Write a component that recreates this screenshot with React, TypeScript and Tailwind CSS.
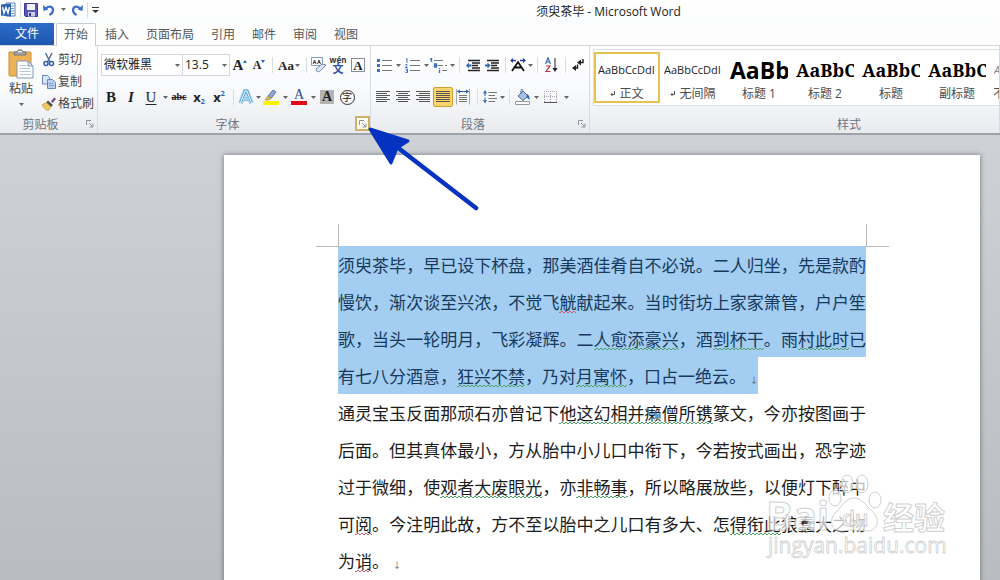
import React, { useState } from "react";
import classnames from "clsx";

type BtnProps = {
  label: string;
  className?: string;
  children: React.ReactNode;
};

function Btn({ label, className, children }: BtnProps) {
  return (
    <button
      type="button"
      aria-label={label}
      className={classnames(
        "flex h-5 shrink-0 items-center justify-center rounded-xs hover:bg-amber-100",
        className || "w-5"
      )}
    >
      {children}
    </button>
  );
}

function Caret({ className }: { className?: string }) {
  return (
    <svg viewBox="0 0 5 3" className={classnames("h-[3px] w-[5px] shrink-0", className)}>
      <path d="M0 0h5L2.500 3z" fill="#666" />
    </svg>
  );
}

function More({ label, wide }: { label: string; wide?: boolean }) {
  return (
    <Btn label={label} className={wide ? "w-2" : "w-1.5"}>
      <Caret />
    </Btn>
  );
}

function Sep() {
  return (
    <span className="flex w-2 shrink-0 justify-center">
      <span className="h-4 w-px bg-[#d9dce0]" />
    </span>
  );
}

function Launcher({ label, active }: { label: string; active?: boolean }) {
  return (
    <button
      type="button"
      aria-label={label}
      className={classnames(
        "absolute right-0 bottom-0.5 flex h-[15px] w-[15px] items-center justify-center",
        active && "border-2 border-[#cdb26a] bg-[#fffdf2]"
      )}
    >
      <svg viewBox="0 0 8 8" className="h-2 w-2 shrink-0" fill="none" stroke="#8c929b">
        <path d="M.5 5V.5H5M3 3l3.500 3.500M7 3.500V7H3.500" />
      </svg>
    </button>
  );
}

type GroupProps = {
  title: string;
  launcher?: boolean;
  active?: boolean;
  className?: string;
  titleClass?: string;
  children: React.ReactNode;
};

function Group({ title, launcher, active, className, titleClass, children }: GroupProps) {
  return (
    <section
      className={classnames(
        "flex h-full flex-col justify-between border-r border-[#d8dbe0] pt-[3px]",
        className
      )}
    >
      {children}
      <div
        className={classnames(
          "relative flex h-4 items-center justify-center text-[#6d7480]",
          titleClass || "pr-4"
        )}
      >
        {title}
        {launcher && <Launcher label={title + "设置"} active={active} />}
      </div>
    </section>
  );
}

/* ---------- icons ---------- */

function Lines({ rows }: { rows: number[][] }) {
  return (
    <svg viewBox="0 0 14 14" className="h-3.5 w-3.5" stroke="#555" shapeRendering="crispEdges">
      {rows.map(([a, b], i) => (
        <path key={i} d={`M${a} ${i * 2 + 1.5}H${b}`} />
      ))}
    </svg>
  );
}

const LEFT = [[0, 14], [0, 11], [0, 14], [0, 11], [0, 14], [0, 11]];
const CENTER = [[0, 14], [2, 12], [0, 14], [2, 12], [0, 14], [2, 12]];
const RIGHT = [[0, 14], [3, 14], [0, 14], [3, 14], [0, 14], [3, 14]];
const FULL = [[0, 14], [0, 14], [0, 14], [0, 14], [0, 14], [0, 14]];

function WordIcon() {
  return (
    <svg viewBox="0 0 16 16" className="h-4 w-4">
      <path d="M6 1h9v13H6z" fill="#fff" stroke="#5b7fb5" />
      <path d="M11 4h3M11 6.500h3M11 9h3M11 11.500h3" stroke="#7d9ccb" />
      <path d="M1 2.500l10-1v13l-10-1z" fill="#2a62b0" />
      <path d="M2.500 5l1.500 6L6 5.500 8 11l1.500-6" fill="none" stroke="#fff" strokeWidth="1.400" />
    </svg>
  );
}

function SaveIcon() {
  return (
    <svg viewBox="0 0 14 14" className="h-3.5 w-3.5">
      <path d="M.5.500h13v13h-12l-1-1z" fill="#5a55b5" stroke="#3e3a94" />
      <path d="M3 1h8v6H3z" fill="#eef1fb" />
      <path d="M4 9h7v4.500H4z" fill="#c9cce4" />
      <path d="M5 10h2v3H5z" fill="#3e3a94" />
    </svg>
  );
}

function UndoIcon({ flip }: { flip?: boolean }) {
  return (
    <svg viewBox="0 0 12 12" className={classnames("h-3 w-3", flip && "-scale-x-100")}>
      <path d="M3 4.500C6 1.500 10 2.500 10 6c0 2-1.500 4-3.500 5" fill="none" stroke="#3c6fc4" strokeWidth="2.200" />
      <path d="M0 1l.5 6 5-1.500z" fill="#3c6fc4" />
    </svg>
  );
}

function PasteIcon() {
  return (
    <svg viewBox="0 0 26 30" className="h-[30px] w-[26px]">
      <path d="M1 3h21a1 1 0 0 1 1 1v23H2a1 1 0 0 1-1-1z" fill="#ecb254" stroke="#c98f35" />
      <path d="M6 6V3h3c0-3 6-3 6 0h3v3z" fill="#a5a9ae" stroke="#72767c" />
      <path d="M10 2.500h4" stroke="#fff" />
      <path d="M9 12h11l5 5v12H9z" fill="#fff" stroke="#8397b8" />
      <path d="M20 12v5h5z" fill="#d7e1f0" stroke="#8397b8" />
      <path d="M11.500 16.500h7M11.500 19.500h11M11.500 22.500h11M11.500 25.500h11" stroke="#b4c3dc" />
    </svg>
  );
}

function CutIcon() {
  return (
    <svg viewBox="0 0 12 14" className="h-3.5 w-3.5" fill="none">
      <path d="M2.500 0l4.500 9M9 0L4.500 9" stroke="#5571a5" strokeWidth="1.500" />
      <circle cx="3" cy="10.500" r="2" stroke="#2f5cae" strokeWidth="1.500" />
      <circle cx="8.500" cy="10.500" r="2" stroke="#2f5cae" strokeWidth="1.500" />
    </svg>
  );
}

function CopyIcon() {
  return (
    <svg viewBox="0 0 14 14" className="h-3.5 w-3.5" stroke="#6485bd">
      <path d="M.5.500h5l2 2V9h-7z" fill="#dbe7f8" />
      <path d="M5.500 4.500h5l3 3v6h-8z" fill="#b8d0f0" />
      <path d="M7 8.500h4M7 10.500h5" stroke="#7e9fd4" />
    </svg>
  );
}

function BrushIcon() {
  return (
    <svg viewBox="0 0 14 14" className="h-3.5 w-3.5">
      <path d="M9 4l3.500-3.500L14 2l-3.500 4z" fill="#6b4a87" />
      <path d="M6 3.500L11 8l-2 2-5-4.500z" fill="#4e5158" />
      <path d="M4 5.500L9 10l-3 4c-2-1-4.500-3-6-6z" fill="#eccb62" stroke="#b38e2d" strokeWidth=".6" />
    </svg>
  );
}

function ListIcon({ numbered }: { numbered?: boolean }) {
  return (
    <svg viewBox="0 0 15 15" className="h-[15px] w-[15px]">
      <path d="M5 2.500h10M5 7.500h10M5 12.500h10" stroke="#777" />
      {numbered ? (
        <path d="M1 1l1-.5V5M.5 6.500h1.500v1L.5 9.500h2M.5 11h2v3.500h-2M1 12.700h1" fill="none" stroke="#3c73bf" />
      ) : (
        <path d="M0 1h3v3H0zM0 6h3v3H0zM0 11h3v3H0z" fill="#3c73bf" />
      )}
    </svg>
  );
}

function MultiIcon() {
  return (
    <svg viewBox="0 0 18 15" className="h-[15px] w-[18px]" fill="none">
      <path d="M4 2.500h9M8 7.500h5M15 7.500h2M12 12.500h5" stroke="#777" />
      <path d="M0 1.500l1.500-1V4M4 6h2.500v3H4.500V7.500h2M9.500 10v1M9.500 11.800V15" stroke="#3c73bf" strokeWidth="1.400" />
    </svg>
  );
}

function IndentIcon({ right }: { right?: boolean }) {
  return (
    <svg viewBox="0 0 14 13" className="h-[13px] w-3.5">
      <path d="M2 1.500h12M6 4h8M6 6.500h6M6 9h8M2 11.500h12" stroke="#222" strokeWidth="1.300" />
      <path d={right ? "M5.500 6.500L2.500 3.500v2H0v2h2.500v2z" : "M0 6.500L3 3.500v2h2.500v2H3v2z"} fill="#2c62b8" />
    </svg>
  );
}

function AsianLayoutIcon() {
  return (
    <svg viewBox="0 0 16 14" className="h-3.5 w-4" fill="none">
      <path d="M2 13l6-9 6 9M4.500 9.500h7" stroke="#111" strokeWidth="1.800" />
      <path d="M1 2.500h5M10 2.500h5" stroke="#2b3f99" strokeWidth="1.500" />
      <path d="M0 2.500L3 0v5zM16 2.500L13 0v5z" fill="#2b3f99" />
    </svg>
  );
}

function SortIcon() {
  return (
    <svg viewBox="0 0 13 16" className="h-4 w-[13px]" fill="none">
      <path d="M.5 7L3 .8 5.500 7M1.500 5h3" stroke="#3a69b5" strokeWidth="1.200" />
      <path d="M1 9h4l-4 5.500h4.500" stroke="#b23a3a" strokeWidth="1.200" />
      <path d="M10 1v12" stroke="#222" />
      <path d="M7.500 11h5L10 15z" fill="#222" />
    </svg>
  );
}

function MarksIcon() {
  return (
    <svg viewBox="0 0 12 14" className="h-3.5 w-3" fill="none">
      <path d="M11 1v3.500H7M5.500 6.500V10H3" stroke="#222" strokeWidth="1.400" />
      <path d="M5 4.500l4-3v6zM0 10l4-3v6z" fill="#222" />
    </svg>
  );
}

function DistributeIcon() {
  return (
    <svg viewBox="0 0 14 16" className="h-4 w-3.5">
      <path d="M.5 0v15.500M13.500 0v15.500" stroke="#aaa" />
      <path d="M1 2.500h12" stroke="#2c62b8" />
      <path d="M1 2.500L4 .500v4zM13 2.500l-3-2v4z" fill="#2c62b8" />
      <path d="M3 6.500h8M3 8.500h8M3 10.500h8M3 12.500h8" stroke="#777" />
    </svg>
  );
}

function SpacingIcon() {
  return (
    <svg viewBox="0 0 14 14" className="h-3.5 w-3.5">
      <path d="M5.500 2.500H14M5.500 5.500H12M5.500 8.500H14M5.500 11.500H12" stroke="#777" />
      <path d="M2 0l2 3.500H0zM2 13.500L4 10H0zM1.500 3h1v3h-1zM1.500 7.500h1v3h-1z" fill="#2c62b8" />
    </svg>
  );
}

function ShadingIcon() {
  return (
    <svg viewBox="0 0 16 16" className="h-4 w-4">
      <path d="M3 7l5-5 5 5-5 4.500z" fill="#a9c2e6" stroke="#47689d" />
      <path d="M6 5V1.500c0-1.500 2-1.500 2 0" fill="none" stroke="#47689d" />
      <path d="M12 5c2 1 3 3 2.500 6-1-1-2-2-3-2.500z" fill="#2c62b8" />
      <path d="M.5 12.500h14v3H.5z" fill="#fff" stroke="#999" />
    </svg>
  );
}

function BorderIcon() {
  return (
    <svg viewBox="0 0 14 14" className="h-3.5 w-3.5" fill="none">
      <path d="M.5 1v11M6.500 1v11M12.500 1v11M0 1.500h13M0 6.500h13" stroke="#aaa" strokeDasharray="1 1" />
      <path d="M0 12.500h13" stroke="#555" />
    </svg>
  );
}

function ClearIcon() {
  return (
    <svg viewBox="0 0 16 16" className="h-4 w-4">
      <path d="M.5.500h11v8H.5z" fill="#fff" stroke="#8299c2" />
      <path d="M2 7l1.500-4L5 7M2.500 5.500h2M6.500 7L8 3l1.500 4M7 5.500h2" fill="none" stroke="#333" strokeWidth=".9" />
      <path d="M5 12l6-5 4 1-5.500 5.500c-1 1.500-3 1.500-4 .5z" fill="#dde6f4" stroke="#7187ae" />
    </svg>
  );
}

function HighlightIcon() {
  return (
    <svg viewBox="0 0 16 16" className="h-4 w-4">
      <path d="M0 12h16v4H0z" fill="#fff200" />
      <path d="M5 7l5-6 3 2-5 6.500z" fill="#8fa7cf" stroke="#4c618c" strokeWidth=".8" />
      <path d="M5 7l3 2.500-2 1.500H2z" fill="#e3bd4e" stroke="#8a7538" strokeWidth=".6" />
    </svg>
  );
}

/* ---------- ribbon ---------- */

const TABS = ["插入", "页面布局", "引用", "邮件", "审阅", "视图"];

function TitleBar() {
  return (
    <header className="flex h-[23px] items-center bg-gradient-to-b from-white to-[#fbfcfd]">
      <div className="flex h-full items-center pb-1">
        <WordIcon />
        <Sep />
        <Btn label="保存" className="w-3.5"><SaveIcon /></Btn>
        <Btn label="撤消" className="ml-[5px] w-3"><UndoIcon /></Btn>
        <Btn label="撤消列表" className="w-4"><Caret /></Btn>
        <Btn label="恢复" className="w-3"><UndoIcon flip /></Btn>
        <Sep />
        <Btn label="自定义快速访问工具栏" className="w-2">
          <svg viewBox="0 0 7 6" className="h-1.5 w-[7px] shrink-0">
            <path d="M0 .500h7" stroke="#333" />
            <path d="M0 3h7L3.500 6z" fill="#333" />
          </svg>
        </Btn>
      </div>
      <h1 className="flex-1 pl-[118px] text-center text-xs text-[#222]">须臾茶毕 - Microsoft Word</h1>
    </header>
  );
}

function TabBar() {
  return (
    <nav className="flex h-[23px] items-stretch border-b border-[#d3d6db] text-[#555]">
      <button type="button" className="w-[54px] bg-gradient-to-b from-[#2c6cc9] to-[#1f57ae] text-white">
        文件
      </button>
      <button
        type="button"
        className="-mb-px ml-0.5 w-10 rounded-t-xs border border-b-0 border-[#c9cdd3] bg-white"
      >
        开始
      </button>
      <div className="flex gap-px pt-px pl-px">
        {TABS.map((tab) => (
          <button key={tab} type="button" className="px-2">
            {tab}
          </button>
        ))}
      </div>
    </nav>
  );
}

function ClipboardGroup() {
  return (
    <Group title="剪贴板" launcher className="w-[98px]">
      <div className="flex">
        <button type="button" className="flex w-[42px] flex-col items-center text-[#444]">
          <PasteIcon />
          <span className="leading-5">粘贴</span>
          <Caret className="mt-1" />
        </button>
        <div className="flex flex-1 flex-col text-[#444]">
          <button type="button" className="flex h-[22px] items-center gap-0.5"><CutIcon /><span>剪切</span></button>
          <button type="button" className="flex h-[22px] items-center gap-0.5"><CopyIcon /><span>复制</span></button>
          <button type="button" className="flex h-[22px] items-center gap-0.5 whitespace-nowrap"><BrushIcon /><span>格式刷</span></button>
        </div>
      </div>
    </Group>
  );
}

function Combo({ label, options, className }: { label: string; options: string[]; className: string }) {
  const [value, setValue] = useState(options[0]);
  return (
    <label className={classnames("relative flex h-[22px] items-center border border-[#d5d8dc] bg-white", className)}>
      <select
        aria-label={label}
        value={value}
        onChange={(e) => setValue(e.target.value)}
        className="h-full w-full appearance-none pl-0.5 text-[#222] outline-none"
      >
        {options.map((o) => (
          <option key={o}>{o}</option>
        ))}
      </select>
      <Caret className="pointer-events-none absolute right-0.5" />
    </label>
  );
}

const SERIF = "font-['Liberation_Serif',serif] leading-none text-[#222]";

function FontGroup() {
  return (
    <Group title="字体" launcher active className="w-[273px] pl-[3px]">
      <div className="flex flex-col gap-2 pt-1">
        <div className="flex h-6 items-center">
          <Combo label="字体" options={["微软雅黑", "宋体", "黑体"]} className="w-[82px]" />
          <Combo label="字号" options={["13.5", "14", "16"]} className="-ml-px w-12" />
          <Btn label="增大字体">
            <span className={classnames(SERIF, "text-[15px] font-bold")}>A</span>
            <svg viewBox="0 0 4 3" className="mb-2 h-[3px] w-1"><path d="M0 3h4L2 0z" fill="#2c62b8" /></svg>
          </Btn>
          <Btn label="缩小字体" className="w-[18px]">
            <span className={classnames(SERIF, "text-xs font-bold")}>A</span>
            <svg viewBox="0 0 4 3" className="mb-2 h-[3px] w-1"><path d="M0 0h4L2 3z" fill="#2c62b8" /></svg>
          </Btn>
          <Sep />
          <Btn label="更改大小写" className="w-[26px] gap-px">
            <span className={classnames(SERIF, "text-[13px] font-bold")}>Aa</span>
            <Caret />
          </Btn>
          <Sep />
          <Btn label="清除格式" className="w-[18px]"><ClearIcon /></Btn>
          <Btn label="拼音指南" className="w-5 flex-col">
            <span className="text-[8px] leading-[7px] font-bold text-[#333]">wén</span>
            <span className="text-[11px] leading-[11px] font-bold text-[#2c4fa8]">文</span>
          </Btn>
          <Btn label="字符边框">
            <span className={classnames(SERIF, "flex h-3.5 w-3.5 items-center justify-center border border-[#8a8f99] text-[13px] font-bold")}>A</span>
          </Btn>
        </div>
        <div className="flex h-6 items-center">
          <Btn label="加粗"><span className={classnames(SERIF, "text-[15px] font-bold")}>B</span></Btn>
          <Btn label="倾斜"><span className={classnames(SERIF, "text-[15px] font-bold italic")}>I</span></Btn>
          <Btn label="下划线"><span className={classnames(SERIF, "text-[15px] underline underline-offset-2")}>U</span></Btn>
          <More label="下划线样式" wide />
          <Btn label="删除线"><span className={classnames(SERIF, "text-[10px] font-bold line-through")}>abc</span></Btn>
          <Btn label="下标">
            <span className="text-[13px] leading-none font-bold text-[#222]">x</span>
            <span className="mt-2 text-[7px] leading-none font-bold text-[#2c62b8]">2</span>
          </Btn>
          <Btn label="上标">
            <span className="text-[13px] leading-none font-bold text-[#222]">x</span>
            <span className="mb-2 text-[7px] leading-none font-bold text-[#2c62b8]">2</span>
          </Btn>
          <Sep />
          <Btn label="文本效果" className="w-[18px]">
            <svg viewBox="0 0 16 16" className="h-4 w-4" fill="none" strokeLinejoin="round">
              <path d="M2.500 14L7 2h2l4.500 12M5 10h6" stroke="#a8d3ef" strokeWidth="4.500" />
              <path d="M2.500 14L7 2h2l4.500 12M5 10h6" stroke="#4a9fd4" strokeWidth="2.500" />
              <path d="M2.500 14L7 2h2l4.500 12M5 10h6" stroke="#fff" />
            </svg>
          </Btn>
          <More label="文本效果选项" />
          <Btn label="突出显示"><HighlightIcon /></Btn>
          <More label="突出显示颜色" wide />
          <Btn label="字体颜色" className="w-5 flex-col">
            <span className="font-['Liberation_Serif',serif] text-sm leading-3 text-[#2b4a8e]">A</span>
            <span className="h-1 w-4 bg-[#e10b17]" />
          </Btn>
          <More label="字体颜色选项" wide />
          <Btn label="字符底纹">
            <span className={classnames(SERIF, "flex h-3.5 w-3.5 items-center justify-center bg-[#b3b3b3] text-sm font-bold")}>A</span>
          </Btn>
          <Btn label="带圈字符">
            <span className="flex h-[15px] w-[15px] items-center justify-center rounded-full border border-[#333] text-[10px] leading-none text-[#222]">字</span>
          </Btn>
        </div>
      </div>
    </Group>
  );
}

function ParagraphGroup() {
  return (
    <Group title="段落" launcher className="w-[219px] pl-0.5">
      <div className="flex flex-col gap-2 pt-1">
        <div className="flex h-6 items-center">
          <Btn label="项目符号" className="w-[22px]"><ListIcon /></Btn>
          <More label="项目符号库" />
          <Btn label="编号" className="w-[22px]"><ListIcon numbered /></Btn>
          <More label="编号库" />
          <Btn label="多级列表"><MultiIcon /></Btn>
          <More label="列表库" />
          <Sep />
          <Btn label="减少缩进量"><IndentIcon /></Btn>
          <Btn label="增加缩进量" className="w-[18px]"><IndentIcon right /></Btn>
          <Sep />
          <Btn label="中文版式" className="w-[18px]"><AsianLayoutIcon /></Btn>
          <More label="中文版式选项" />
          <Sep />
          <Btn label="排序"><SortIcon /></Btn>
          <Sep />
          <Btn label="显示编辑标记" className="w-[18px]"><MarksIcon /></Btn>
        </div>
        <div className="flex h-6 items-center">
          <Btn label="左对齐"><Lines rows={LEFT} /></Btn>
          <Btn label="居中"><Lines rows={CENTER} /></Btn>
          <Btn label="右对齐"><Lines rows={RIGHT} /></Btn>
          <Btn label="两端对齐" className="w-5 border border-[#c9a036] bg-[#fcd467]"><Lines rows={FULL} /></Btn>
          <Btn label="分散对齐"><DistributeIcon /></Btn>
          <Sep />
          <Btn label="行距" className="w-[18px]"><SpacingIcon /></Btn>
          <More label="行距选项" />
          <Sep />
          <Btn label="底纹"><ShadingIcon /></Btn>
          <More label="底纹颜色" />
          <Btn label="边框" className="w-6"><BorderIcon /></Btn>
          <More label="边框选项" />
        </div>
      </div>
    </Group>
  );
}

const HEADING = "font-['Noto_Serif','Liberation_Serif',serif] text-lg font-bold text-black";

const STYLES = [
  { name: "正文", mark: true, sample: "AaBbCcDdI", look: "text-[11px] text-[#222]", active: true },
  { name: "无间隔", mark: true, sample: "AaBbCcDdI", look: "text-[11px] text-[#222]" },
  { name: "标题 1", sample: "AaBb", look: "text-[23px] font-bold text-black" },
  { name: "标题 2", sample: "AaBbC", look: HEADING },
  { name: "标题", sample: "AaBbC", look: HEADING },
  { name: "副标题", sample: "AaBbC", look: HEADING },
  { name: "不明显强调", sample: "AaBbCcDdI", look: "text-[11px] italic text-[#888]" },
];

function StylesGroup() {
  return (
    <Group title="样式" className="min-w-0 flex-1 pl-[3px]" titleClass="pl-[106px]">
      <div className="flex h-[57px] overflow-hidden border border-r-0 border-[#dcdfe3] bg-white py-0.5">
        {STYLES.map((s) => (
          <button
            key={s.name}
            type="button"
            className={classnames(
              "flex w-[66px] shrink-0 flex-col border-2 px-0.5",
              s.active ? "border-[#e8c14f]" : "border-transparent"
            )}
          >
            <span className={classnames("flex h-8 w-full items-center overflow-hidden whitespace-nowrap", s.look)}>
              {s.sample}
            </span>
            <span className="flex w-full items-center justify-center gap-1 overflow-hidden leading-[15px] whitespace-nowrap text-[#4c4c4c]">
              {s.mark && (
                <svg viewBox="0 0 5 6" className="h-1.5 w-[5px]" fill="none" stroke="#555">
                  <path d="M4.500 0v3.500H1M2.500 2L1 3.500 2.500 5" />
                </svg>
              )}
              {s.name}
            </span>
          </button>
        ))}
      </div>
    </Group>
  );
}

/* ---------- document ---------- */

// two offset dashed rows make the small zigzag under flagged words
function Wavy({ red, children }: { red?: boolean; children: React.ReactNode }) {
  return (
    <span
      className={classnames(
        "bg-[length:4px_1px] bg-[position:0_calc(100%-1px),0_calc(100%-2px)] bg-repeat-x",
        red
          ? "bg-[image:linear-gradient(90deg,#d0606f_50%,transparent_50%),linear-gradient(90deg,transparent_50%,#d0606f_50%)]"
          : "bg-[image:linear-gradient(90deg,#4fa368_50%,transparent_50%),linear-gradient(90deg,transparent_50%,#4fa368_50%)]"
      )}
    >
      {children}
    </span>
  );
}

function Break() {
  return <span className="pl-1 text-[8px] leading-none text-[#555]">↓</span>;
}

function Corner({ right }: { right?: boolean }) {
  return (
    <span
      className={classnames(
        "absolute top-[69px] h-[23px] w-[23px] border-b border-[#b9b9b9]",
        right ? "right-[91px] border-l" : "left-[92px] border-r"
      )}
    />
  );
}

function Sheet() {
  return (
    <article className="relative min-h-[460px] flex-1 bg-white px-[114px] pt-[91px] text-justify text-[17px] leading-[37px] text-[#1c1c1c] shadow-[0_0_5px_rgba(60,65,75,0.65)]">
      <Corner />
      <Corner right />
      <p>
        <span className="bg-[#a3cdf1] box-decoration-clone py-1.5 text-[#173a5c]">
          须臾茶毕，早已设下杯盘，那美酒佳肴自不必说。二人归坐，先是款酌慢饮，渐次谈至兴浓，不觉飞<Wavy red>觥</Wavy>
          献起来。当时街坊上家家箫管，户户笙歌，当头一轮明月，飞彩凝辉。二<Wavy>人愈添豪兴</Wavy>，酒<Wavy>到杯干</Wavy>。雨<Wavy>村此时</Wavy>
          已有七八分酒意，<Wavy>狂兴不禁</Wavy>，乃对<Wavy>月寓怀</Wavy>，口占一绝云。
          <Break />
        </span>
      </p>
      <p>
        通灵宝玉反面那顽石亦曾记下<Wavy>他这幻相并癞僧所镌</Wavy>
        篆文，今亦按图画于后面。但其真体最小，方从胎中小儿口中衔下，今若按式画出，恐字迹过于微细，使<Wavy>观者大废眼光</Wavy>，亦
        <Wavy>非畅事</Wavy>，所以略展放些，以便灯下醉中可<Wavy red>阅</Wavy>。今注明此故，方不至以胎中之儿口有多大、怎<Wavy>得衔此</Wavy>
        狼蠢大之物为<Wavy red>诮</Wavy>。
        <Break />
      </p>
    </article>
  );
}

function Pointer() {
  return (
    <svg viewBox="0 0 112 86" className="absolute top-[125px] left-[367px] h-[86px] w-28">
      <path d="M30 22L109 83" stroke="#0532c0" strokeWidth="4.500" strokeLinecap="round" />
      <path d="M3 4L41 16 30 23 24 38z" fill="#0532c0" stroke="#0532c0" strokeWidth="3" strokeLinejoin="round" />
    </svg>
  );
}

function Watermark() {
  return (
    <svg
      viewBox="0 0 190 96"
      className="absolute right-[50px] bottom-[14px] h-24 w-[190px]"
      fill="#fff"
      fillOpacity=".7"
      stroke="#c4c4c4"
      strokeOpacity=".8"
      strokeLinejoin="round"
    >
      <g fontFamily="Open Sans, sans-serif">
        <text x="6" y="60" fontSize="40" fontWeight="700">Bai</text>
        <ellipse cx="75" cy="28" rx="6" ry="8" />
        <ellipse cx="87" cy="14" rx="6" ry="9" />
        <ellipse cx="102" cy="14" rx="6" ry="9" />
        <ellipse cx="115" cy="30" rx="6" ry="8" />
        <path d="M94 28c8 0 12 8 18 13 9 8 6 20-5 20-6 0-16-2-24 0-12 1-15-11-7-19 6-5 9-14 18-14z" />
        <text x="82" y="56" fontSize="21" fontWeight="600">du</text>
        <text x="123" y="59" fontSize="31" fontWeight="700" fontFamily="Noto Sans CJK SC, sans-serif">经验</text>
        <text x="8" y="83" fontSize="21" strokeWidth=".8">jingyan.baidu.com</text>
      </g>
    </svg>
  );
}

function App() {
  return (
    <div className="relative flex h-screen flex-col overflow-hidden bg-[#fdfdfe] font-['Open_Sans','Noto_Sans_CJK_SC',sans-serif] text-xs">
      <TitleBar />
      <TabBar />
      <div className="flex h-[89px] shrink-0 border-b-2 border-[#9fa3a9] bg-gradient-to-b from-white via-[#f9fafc] to-[#e9ebef]">
        <ClipboardGroup />
        <FontGroup />
        <ParagraphGroup />
        <StylesGroup />
      </div>
      <main className="flex min-h-0 flex-1 items-start bg-gradient-to-b from-[#ced1d5] to-[#b9bdc1] pt-5 pr-5 pl-56 font-['Noto_Sans_CJK_SC',sans-serif]">
        <Sheet />
      </main>
      <Pointer />
      <Watermark />
    </div>
  );
}

export default App;
